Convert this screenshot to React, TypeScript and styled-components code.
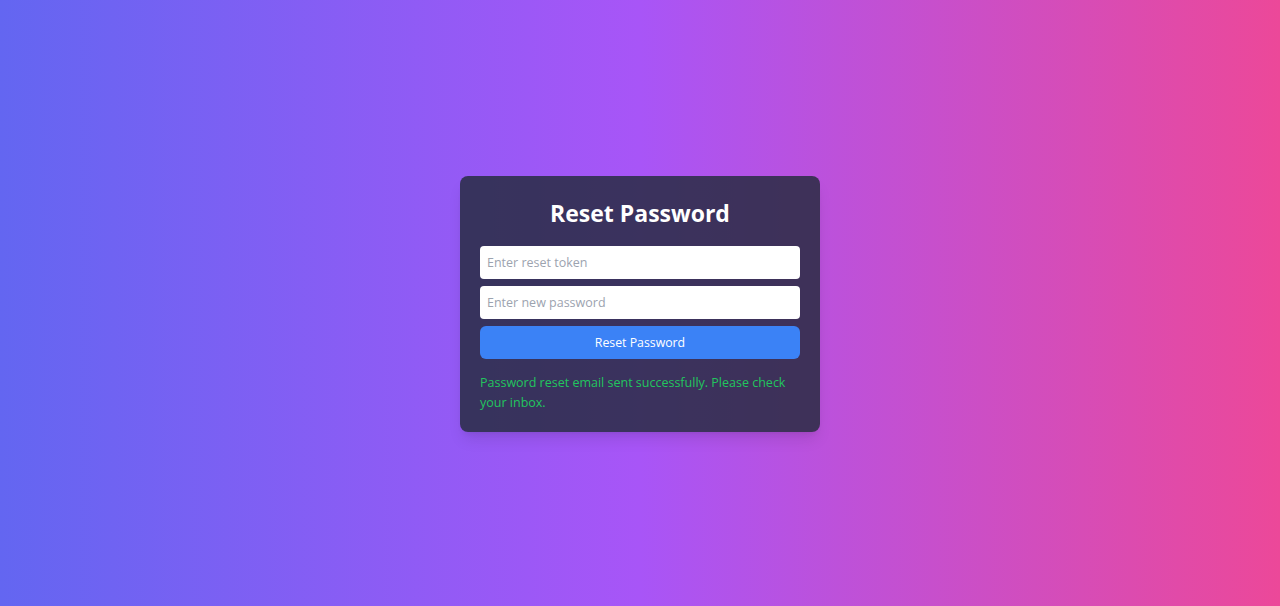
import React from "react";
import styled, { createGlobalStyle } from "styled-components";

const GlobalStyle = createGlobalStyle`
  html, body {
    margin: 0;
    padding: 0;
  }
  body {
    font-family: "Open Sans", "Noto Sans", "Liberation Sans", sans-serif;
  }
  * {
    box-sizing: border-box;
  }
`;

const Page = styled.div`
  min-height: 606px;
  display: flex;
  align-items: center;
  justify-content: center;
  background: linear-gradient(to right, #6366f1, #a855f7, #ec4899);
`;

const Card = styled.div`
  width: 360px;
  margin-top: 2px;
  padding: 20px 20px 19px;
  border-radius: 8px;
  background: rgba(31, 41, 55, 0.8);
  box-shadow: 0 10px 15px -3px rgba(0, 0, 0, 0.1),
    0 4px 6px -4px rgba(0, 0, 0, 0.1);
  display: flex;
  flex-direction: column;
`;

const Title = styled.h2`
  margin: 0 0 16px;
  font-size: 23px;
  line-height: 34px;
  font-weight: 700;
  color: #ffffff;
  text-align: center;
`;

const Input = styled.input`
  width: 100%;
  height: 33px;
  margin-bottom: 7px;
  padding: 0 7px;
  border: none;
  border-radius: 4px;
  background: #ffffff;
  font-family: inherit;
  font-size: 12.5px;
  color: #111827;
  outline: none;

  &::placeholder {
    color: #9ca3af;
  }
`;

const Button = styled.button`
  width: 100%;
  height: 33px;
  border: none;
  border-radius: 6px;
  background: #3b82f6;
  color: #ffffff;
  font-family: inherit;
  font-size: 12.3px;
  cursor: pointer;
`;

const Message = styled.p<{ $tone: "success" | "error" }>`
  margin: 14px 0 0;
  font-size: 12.5px;
  line-height: 20px;
  color: ${(props) => (props.$tone === "success" ? "#22c55e" : "#ef4444")};
`;

const App: React.FC = () => {
  return (
    <>
      <GlobalStyle />
      <Page>
        <Card>
          <Title>Reset Password</Title>
          <Input type="text" placeholder="Enter reset token" />
          <Input type="password" placeholder="Enter new password" />
          <Button>Reset Password</Button>
          <Message $tone="success">
            Password reset email sent successfully. Please check your inbox.
          </Message>
        </Card>
      </Page>
    </>
  );
};

export default App;
